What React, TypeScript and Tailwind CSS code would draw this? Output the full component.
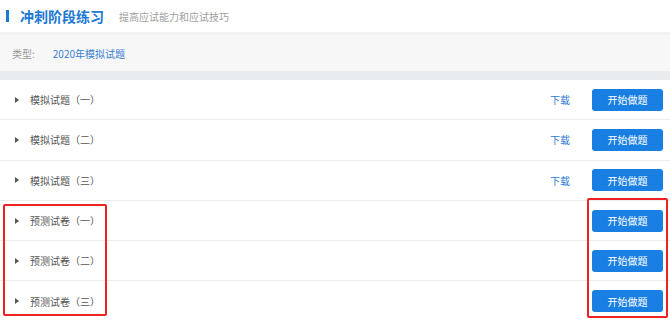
const font = { fontFamily: '"Noto Sans CJK SC", "Noto Sans", sans-serif' };

interface RowProps {
  title: string;
  download?: boolean;
}

const Row = ({ title, download }: RowProps) => (
  <div className="h-[40.3px] flex items-center border-b border-[#ececec] bg-white">
    <span className="ml-[15px] w-0 h-0 border-y-[3px] border-y-transparent border-l-[4px] border-l-[#555]" />
    <span className="ml-[11px] text-[10px] text-[#555]">{title}</span>
    <div className="ml-auto flex items-center">
      {download && <span className="text-[10px] text-[#2b7bd6] mr-[22px]">下载</span>}
      <button className="w-[71px] h-[22px] mr-[7px] rounded-[3px] bg-[#1a7fe2] text-white text-[10px]">
        开始做题
      </button>
    </div>
  </div>
);

const App = () => (
  <div className="relative w-[670px] h-[320px] overflow-hidden bg-white" style={font}>
    <div className="h-[32px] flex items-center">
      <span className="ml-[6px] w-[3px] h-[12px] bg-[#1a78d6]" />
      <span className="ml-[11px] text-[14px] font-bold text-[#1a78d6]">冲刺阶段练习</span>
      <span className="ml-[15px] text-[10px] text-[#a0a0a0]">提高应试能力和应试技巧</span>
    </div>
    <div className="h-[3px] bg-[#f1f1f1]" />
    <div className="h-[36px] flex items-center bg-[#f7f7f7]">
      <span className="ml-[12px] text-[10px] text-[#999]">类型:</span>
      <span className="ml-[18px] text-[10px] text-[#3a80d2]">2020年模拟试题</span>
    </div>
    <div className="h-[9px] bg-[#e9ecef]" />
    <Row title="模拟试题（一）" download />
    <Row title="模拟试题（二）" download />
    <Row title="模拟试题（三）" download />
    <Row title="预测试卷（一）" />
    <Row title="预测试卷（二）" />
    <Row title="预测试卷（三）" />
    <div className="absolute left-[3px] top-[204px] w-[104px] h-[112px] border-2 border-[#e22] rounded-[2px]" />
    <div className="absolute left-[587px] top-[198px] w-[81px] h-[120px] border-2 border-[#e22] rounded-[2px]" />
  </div>
);

export default App;
